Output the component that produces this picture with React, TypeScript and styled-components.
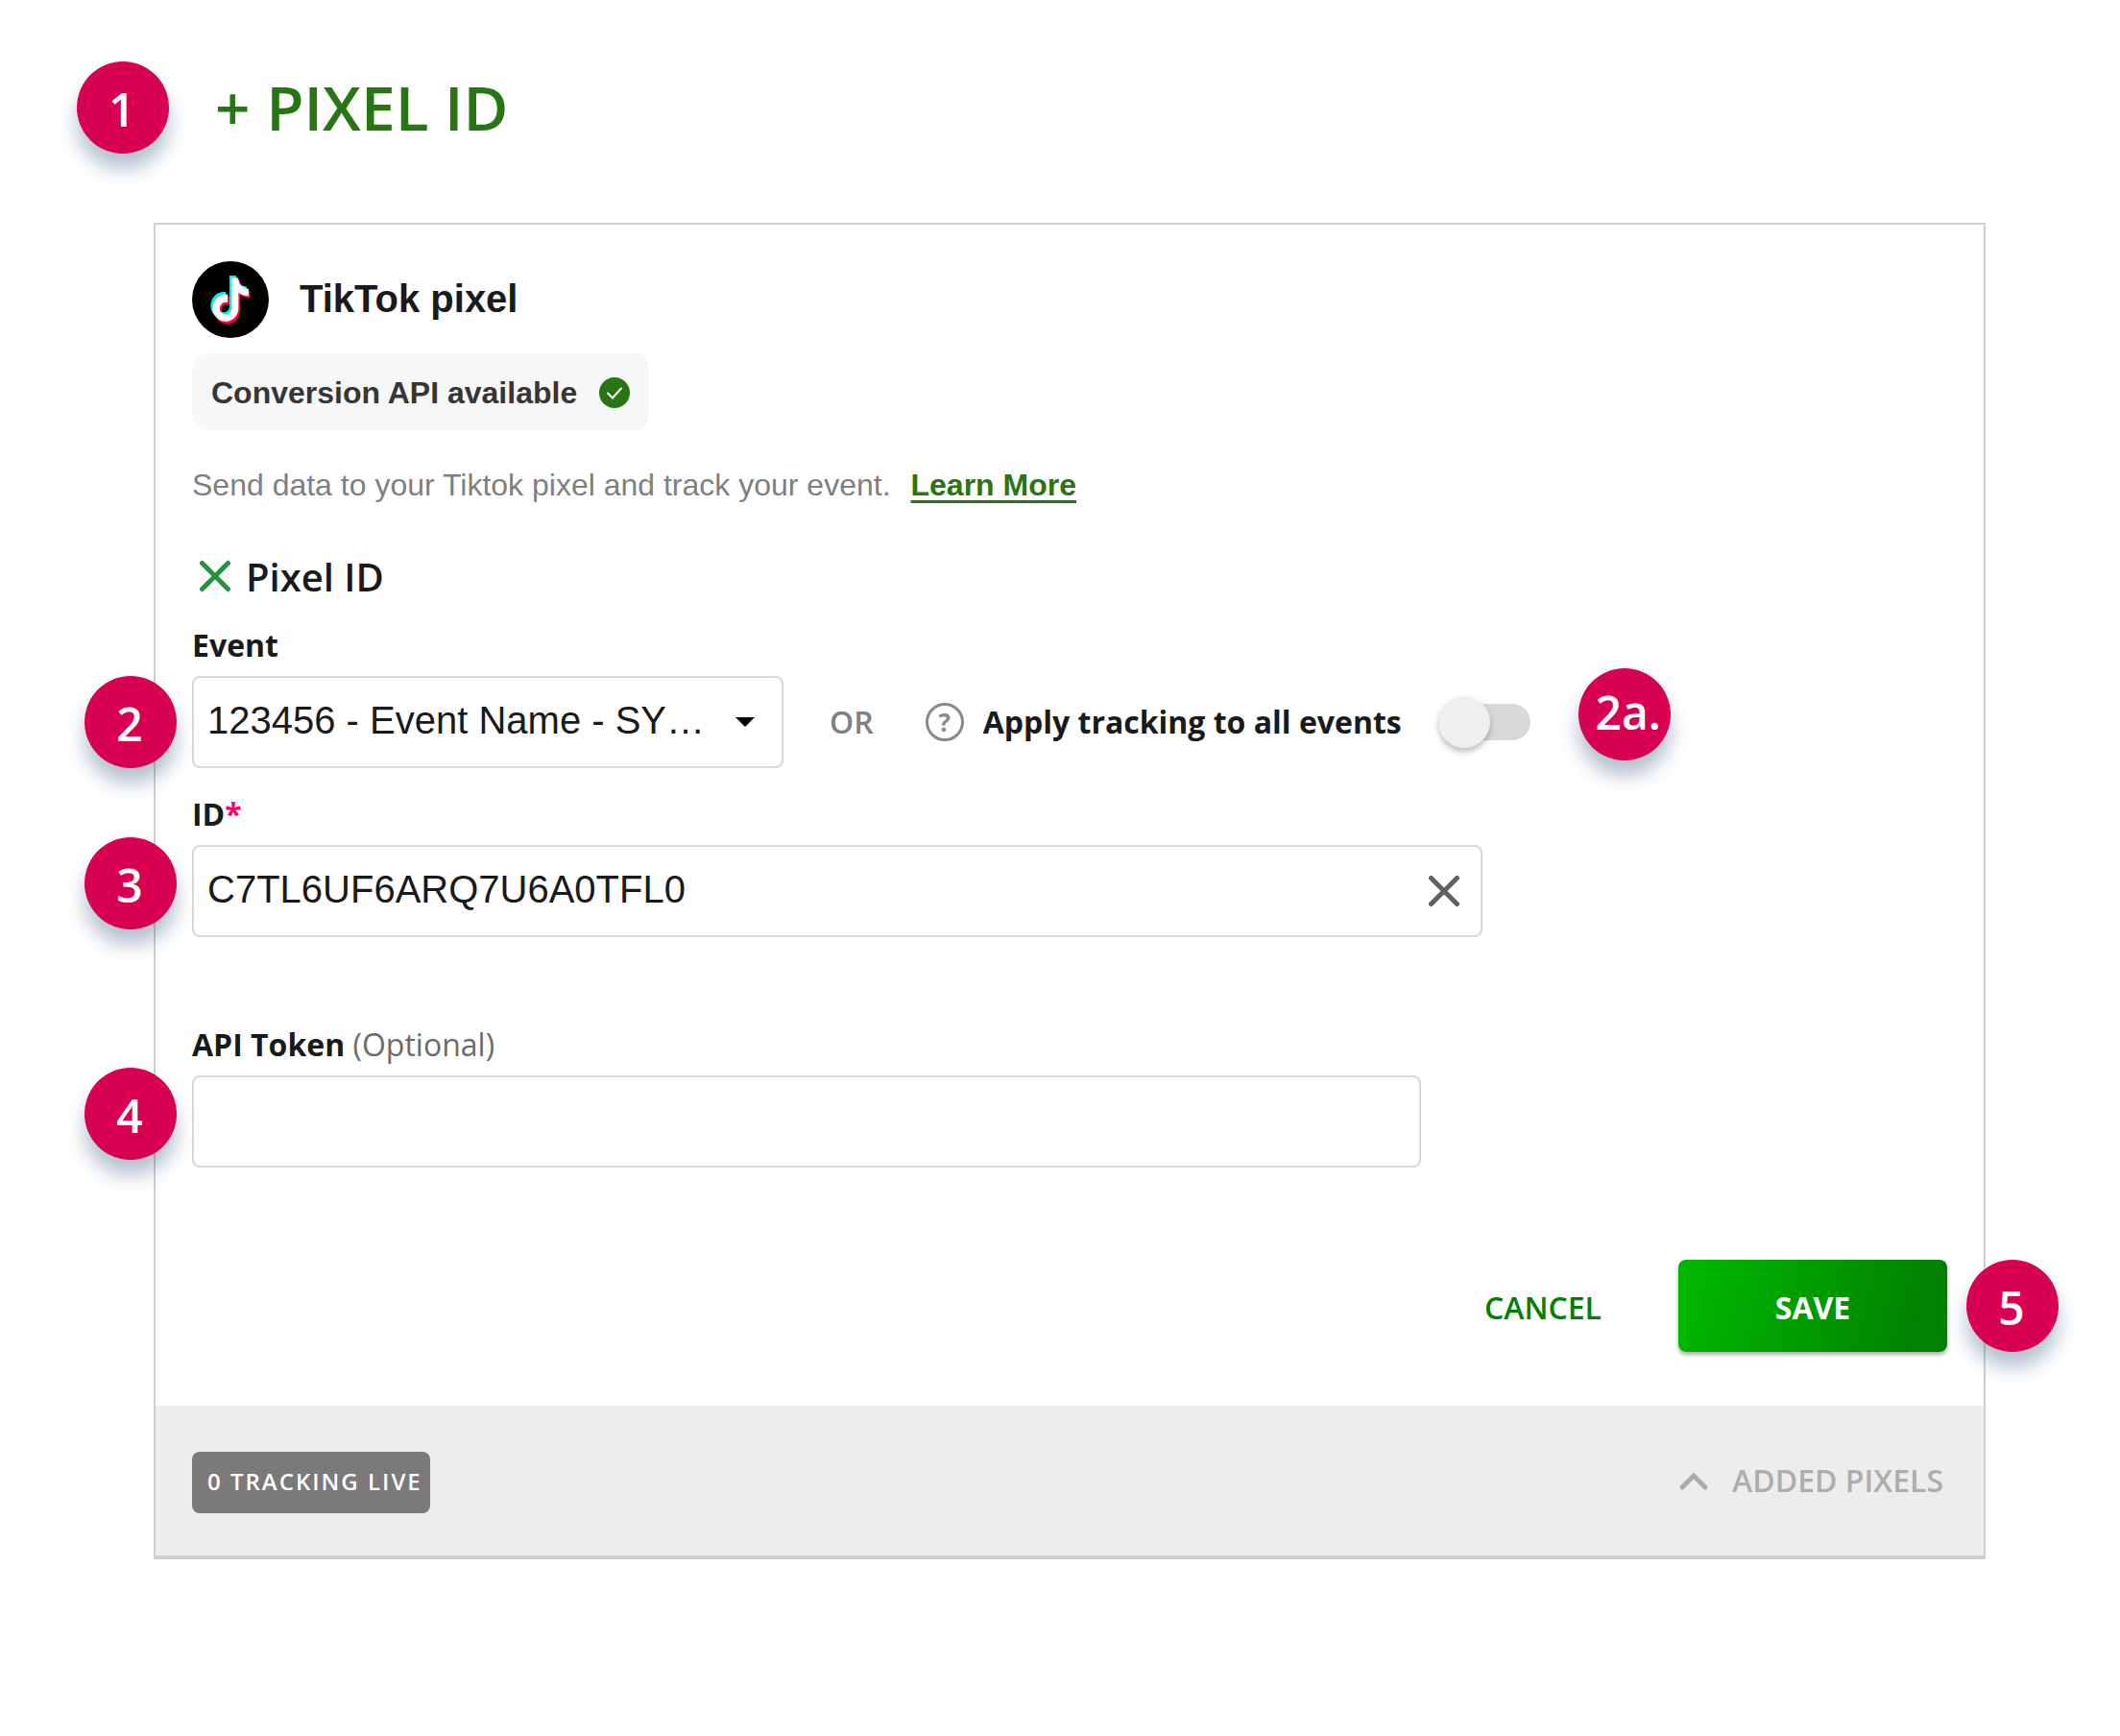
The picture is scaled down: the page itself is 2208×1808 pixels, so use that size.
import React, { useState } from "react";
import styled, { createGlobalStyle } from "styled-components";

const sans = `"Open Sans", "Noto Sans", sans-serif`;
const arial = `"Liberation Sans", Arial, sans-serif`;

const GlobalStyle = createGlobalStyle`
  *, *::before, *::after { box-sizing: border-box; }
  body { margin: 0; background: #fff; color: #1a1a1a; font-family: ${sans}; }
  button, input, select { font: inherit; color: inherit; margin: 0; }
  h1, h2, h3, p { margin: 0; }
`;

const Page = styled.div`
  padding: 64px 140px 184px 80px;
`;

const Header = styled.header`
  display: flex;
  align-items: center;
  gap: 48px;
  margin-bottom: 72px;
`;

const Step = styled.span`
  display: flex;
  flex: none;
  align-items: center;
  justify-content: center;
  width: 96px;
  height: 96px;
  padding: 4px 2px 0 0;
  border-radius: 50%;
  background: #d80050;
  color: #fff;
  font: 600 48px/64px ${sans};
  white-space: nowrap;
  box-shadow: 0 16px 20px rgba(20, 60, 100, 0.32);
`;

const LeftStep = styled(Step)<{ $raised?: boolean }>`
  position: absolute;
  top: ${(p) => (p.$raised ? "-8px" : "0")};
  right: 100%;
  margin-right: 16px;
`;

const RightStep = styled(Step)<{ $raised?: boolean; $gap: number }>`
  position: absolute;
  top: ${(p) => (p.$raised ? "-8px" : "0")};
  left: 100%;
  margin-left: ${(p) => p.$gap}px;
  padding: ${(p) => (p.$raised ? "0 0 4px 8px" : "4px 2px 0 0")};
`;

const AddPixel = styled.button`
  padding: 0;
  border: 0;
  background: none;
  color: #287514;
  font: 600 64px/96px ${sans};
  cursor: pointer;
`;

const Card = styled.main`
  margin-left: 80px;
  border: 2px solid #cfcfcf;
  border-bottom-width: 4px;
  background: #fff;
`;

const Form = styled.form`
  padding: 38px 38px 56px;
`;

const Brand = styled.div`
  display: flex;
  align-items: center;
  gap: 32px;
  margin-bottom: 16px;
`;

const BrandLogo = styled.svg`
  flex: none;
  width: 80px;
  height: 80px;
`;

const BrandName = styled.h1`
  padding-bottom: 2px;
  font: 700 40px/48px ${arial};
`;

const Availability = styled.div`
  display: inline-flex;
  align-items: center;
  gap: 23px;
  height: 80px;
  padding: 2px 20px 0;
  border-radius: 16px;
  background: #f7f7f7;
  color: #363636;
  font: 700 32px/40px ${arial};
`;

const Glyph = styled.svg<{ $size: number }>`
  display: block;
  flex: none;
  width: ${(p) => p.$size}px;
  height: ${(p) => p.$size}px;
`;

const Intro = styled.p`
  margin: 33px 0 43px;
  color: #7f7f7f;
  font: 400 32px/48px ${arial};
`;

const LearnMore = styled.a`
  margin-left: 21px;
  color: #287514;
  font-weight: 700;
  text-decoration: underline;
  text-decoration-thickness: 3px;
  text-underline-offset: 5px;
`;

const SectionTitle = styled.div`
  display: flex;
  align-items: center;
  gap: 16px;
  height: 56px;
  margin-bottom: 24px;
  padding-left: 8px;
`;

const SectionName = styled.h2`
  padding-top: 2px;
  font: 600 40px/56px ${sans};
`;

const IconButton = styled.button`
  display: block;
  flex: none;
  padding: 0;
  border: 0;
  background: none;
  cursor: pointer;
`;

const Field = styled.div<{ $gap: number }>`
  margin-bottom: ${(p) => p.$gap}px;
`;

const Label = styled.label`
  display: block;
  width: fit-content;
  margin-bottom: 12px;
  font: 700 32px/40px ${sans};
`;

const Required = styled.span`
  color: #ff0069;
`;

const Optional = styled.span`
  color: #6b6b6b;
  font-weight: 400;
`;

const Control = styled.div<{ $width: number }>`
  position: relative;
  display: flex;
  align-items: center;
  width: ${(p) => p.$width}px;
  max-width: 100%;
  height: 96px;
`;

const fieldBox = `
  width: 100%;
  height: 100%;
  border: 2px solid #d9d9d9;
  border-radius: 8px;
  background: #fff;
  font-family: ${arial};
  font-size: 40px;
  outline-color: #287514;
`;

const TextInput = styled.input`
  ${fieldBox}
  padding: 0 72px 4px 14px;
`;

const Select = styled.select`
  ${fieldBox}
  appearance: none;
  padding: 0 64px 4px 14px;
`;

const Trailing = styled.span<{ $inset: number }>`
  position: absolute;
  right: ${(p) => p.$inset}px;
  display: flex;
`;

const Arrow = styled(Trailing)`
  border: 10px solid transparent;
  border-top-color: #000;
  border-bottom-width: 0;
  pointer-events: none;
`;

const EventRow = styled.div`
  display: flex;
  align-items: center;
`;

const Or = styled.span`
  margin: 0 54px 0 48px;
  color: #808080;
  font: 600 32px/40px ${sans};
`;

const Help = styled.button`
  flex: none;
  width: 40px;
  height: 40px;
  margin-right: 20px;
  padding: 0;
  border: 3px solid #8a8a8a;
  border-radius: 50%;
  background: none;
  color: #8a8a8a;
  font: 700 26px/34px ${sans};
`;

const ToggleLabel = styled.label`
  margin-right: 38px;
  font: 700 32px/40px ${sans};
`;

const ToggleBox = styled.div`
  position: relative;
  display: flex;
  align-items: center;
  height: 96px;
`;

const Toggle = styled.input`
  appearance: none;
  position: relative;
  width: 96px;
  height: 38px;
  border-radius: 19px;
  background: #d9d9d9;
  cursor: pointer;

  &::before {
    content: "";
    position: absolute;
    top: -8px;
    left: 0;
    width: 54px;
    height: 54px;
    border-radius: 50%;
    background: #efefef;
    box-shadow: 0 4px 6px rgba(0, 0, 0, 0.25);
  }
  &:checked { background: #8fc983; }
  &:checked::before { left: 42px; background: #287514; }
`;

const Actions = styled.div`
  display: flex;
  align-items: center;
  justify-content: flex-end;
  gap: 80px;
`;

const Cancel = styled.button`
  padding: 4px 0 0;
  border: 0;
  background: none;
  color: #008000;
  font: 600 32px/40px ${sans};
  cursor: pointer;
`;

const SaveBox = styled.div`
  position: relative;
`;

const Save = styled.button`
  display: block;
  width: 280px;
  height: 96px;
  padding: 4px 0 0;
  border: 0;
  border-radius: 8px;
  background: linear-gradient(105deg, #00b400 10%, #008000 92%);
  box-shadow: 0 3px 4px rgba(0, 0, 0, 0.32);
  color: #fff;
  font: 700 32px/40px ${sans};
  cursor: pointer;
`;

const Footer = styled.footer`
  display: flex;
  align-items: center;
  justify-content: space-between;
  padding: 48px 42px 44px 38px;
  background: #ededed;
`;

const Live = styled.span`
  display: flex;
  align-items: center;
  height: 64px;
  padding: 0 8px 2px 16px;
  border-radius: 8px;
  background: #7c797a;
  color: #fff;
  font: 600 24px/32px ${sans};
  letter-spacing: 2px;
`;

const Added = styled.button`
  display: flex;
  align-items: center;
  gap: 24px;
  padding: 0 0 4px;
  border: 0;
  background: none;
  color: #adadad;
  font: 600 32px/40px ${sans};
  cursor: pointer;
`;

const NOTE =
  "M12.525.02c1.31-.02 2.61-.01 3.91-.02.08 1.53.63 3.09 1.75 4.17 1.12 1.11 2.7 1.62 4.24 1.79v4.03c-1.44-.05-2.89-.35-4.2-.97-.57-.26-1.1-.59-1.62-.93-.01 2.92.01 5.84-.02 8.75-.08 1.4-.54 2.79-1.35 3.94-1.31 1.92-3.58 3.17-5.91 3.21-1.43.08-2.86-.31-4.08-1.03-2.02-1.19-3.44-3.37-3.65-5.71-.02-.5-.03-1-.01-1.49.18-1.9 1.12-3.72 2.58-4.96 1.66-1.44 3.98-2.13 6.15-1.72.02 1.48-.04 2.96-.04 4.44-.99-.32-2.15-.23-3.02.37-.63.41-1.11 1.04-1.36 1.75-.21.51-.15 1.07-.14 1.61.24 1.64 1.82 3.02 3.5 2.87 1.12-.01 2.19-.66 2.77-1.61.19-.33.4-.67.41-1.06.1-1.79.06-3.57.07-5.36.01-4.03-.01-8.05.02-12.07z";

function TikTokLogo() {
  return (
    <BrandLogo viewBox="0 0 80 80" aria-hidden="true">
      <circle cx="40" cy="40" r="40" />
      <path d={NOTE} fill="#00f2ea" transform="translate(16.6 15) scale(1.79 1.9)" />
      <path d={NOTE} fill="#ff004f" transform="translate(20.4 19.4) scale(1.79 1.92)" />
      <path d={NOTE} fill="#fff" transform="translate(18.7 17.6) scale(1.79 1.88)" />
    </BrandLogo>
  );
}

function Cross({ color }: { color: string }) {
  return (
    <Glyph $size={32} viewBox="0 0 32 32" aria-hidden="true">
      <path d="M2.5 2.5 29.5 29.5M29.5 2.5 2.5 29.5" stroke={color} strokeWidth="5" strokeLinecap="round" />
    </Glyph>
  );
}

export default function App() {
  const [pixelId, setPixelId] = useState("C7TL6UF6ARQ7U6A0TFL0");

  return (
    <>
      <GlobalStyle />
      <Page>
        <Header>
          <Step>1</Step>
          <AddPixel type="button">+ PIXEL ID</AddPixel>
        </Header>
        <Card>
          <Form onSubmit={(e) => e.preventDefault()}>
            <Brand>
              <TikTokLogo />
              <BrandName>TikTok pixel</BrandName>
            </Brand>
            <Availability>
              Conversion API available
              <Glyph $size={32} viewBox="0 0 32 32" aria-hidden="true">
                <circle cx="16" cy="16" r="16" fill="#287514" />
                <path d="M9 16.5 14 21.5 23 11.5" fill="none" stroke="#fff" strokeWidth="2" strokeLinecap="round" />
              </Glyph>
            </Availability>
            <Intro>
              Send data to your Tiktok pixel and track your event.
              <LearnMore href="#learn-more">Learn More</LearnMore>
            </Intro>
            <SectionTitle>
              <IconButton type="button" aria-label="Remove pixel">
                <Cross color="#24913e" />
              </IconButton>
              <SectionName>Pixel ID</SectionName>
            </SectionTitle>

            <Field $gap={28}>
              <Label htmlFor="event">Event</Label>
              <EventRow>
                <Control $width={616}>
                  <LeftStep>2</LeftStep>
                  <Select id="event">
                    <option>123456 - Event Name - SY…</option>
                  </Select>
                  <Arrow $inset={30} />
                </Control>
                <Or>OR</Or>
                <Help type="button" aria-label="About tracking all events">?</Help>
                <ToggleLabel htmlFor="all-events">Apply tracking to all events</ToggleLabel>
                <ToggleBox>
                  <Toggle id="all-events" type="checkbox" role="switch" />
                  <RightStep $raised $gap={50}>2a.</RightStep>
                </ToggleBox>
              </EventRow>
            </Field>

            <Field $gap={92}>
              <Label htmlFor="pixel-id">
                ID<Required>*</Required>
              </Label>
              <Control $width={1344}>
                <LeftStep $raised>3</LeftStep>
                <TextInput
                  id="pixel-id"
                  value={pixelId}
                  spellCheck={false}
                  onChange={(e) => setPixelId(e.target.value)}
                />
                <Trailing $inset={24}>
                  <IconButton type="button" aria-label="Clear" onClick={() => setPixelId("")}>
                    <Cross color="#606060" />
                  </IconButton>
                </Trailing>
              </Control>
            </Field>

            <Field $gap={96}>
              <Label htmlFor="token">
                API Token <Optional>(Optional)</Optional>
              </Label>
              <Control $width={1280}>
                <LeftStep $raised>4</LeftStep>
                <TextInput id="token" />
              </Control>
            </Field>

            <Actions>
              <Cancel type="button">CANCEL</Cancel>
              <SaveBox>
                <Save type="submit">SAVE</Save>
                <RightStep $gap={20}>5</RightStep>
              </SaveBox>
            </Actions>
          </Form>
          <Footer>
            <Live>0 TRACKING LIVE</Live>
            <Added type="button">
              <Glyph $size={32} viewBox="0 0 32 32" aria-hidden="true">
                <path d="M4 23 16 11 28 23" fill="none" stroke="currentColor" strokeWidth="5" strokeLinecap="round" />
              </Glyph>
              ADDED PIXELS
            </Added>
          </Footer>
        </Card>
      </Page>
    </>
  );
}
